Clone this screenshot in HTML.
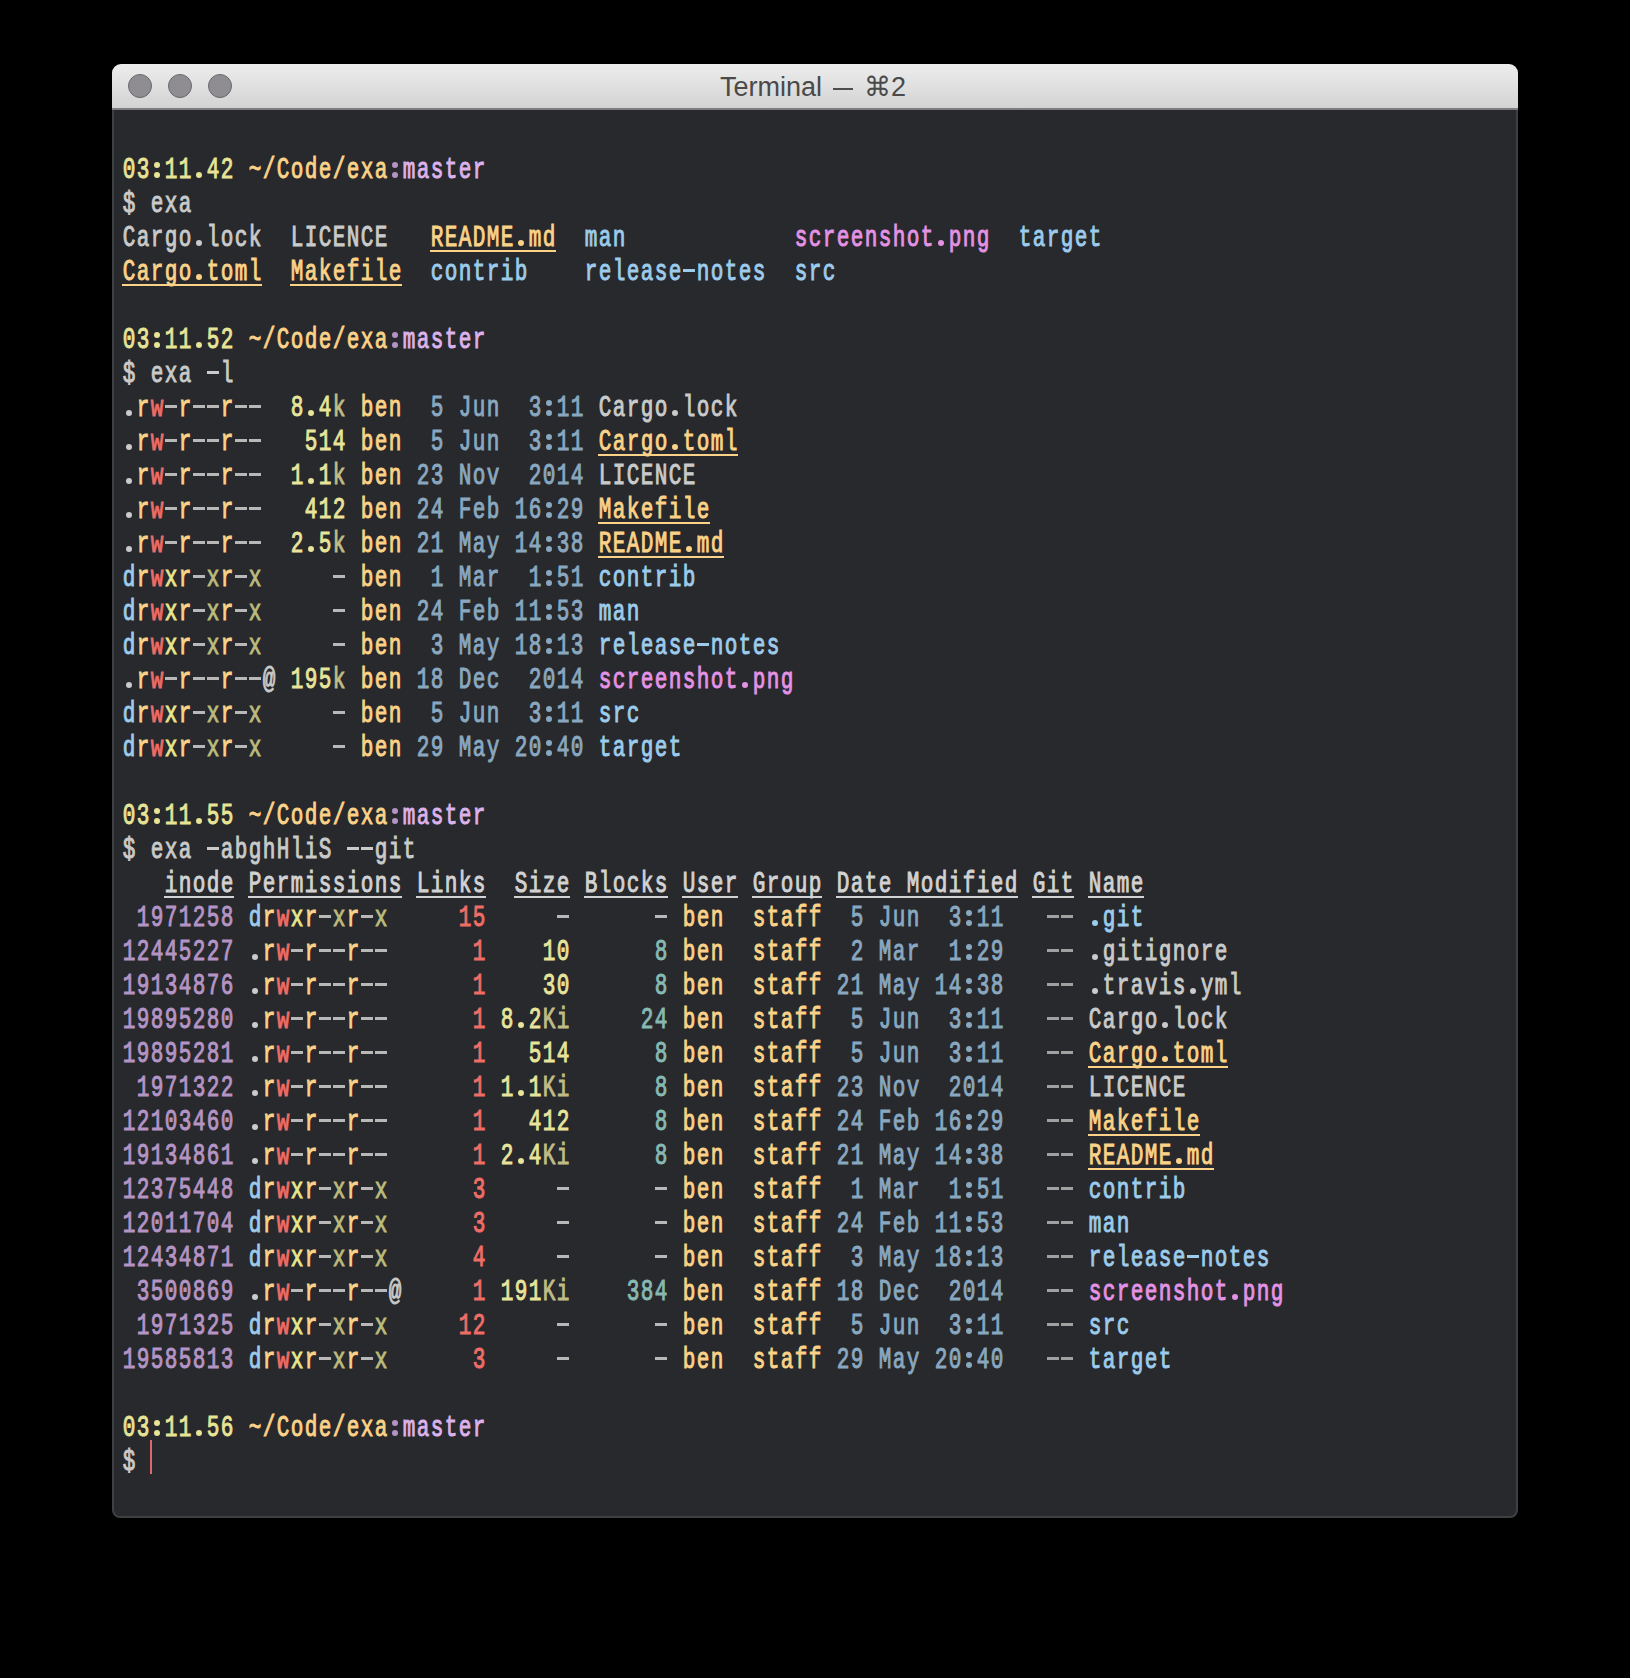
<!DOCTYPE html>
<html><head><meta charset="utf-8"><style>
html,body{margin:0;padding:0;background:#000;width:1630px;height:1678px;overflow:hidden}
#win{position:absolute;left:112px;top:64px;width:1406px;height:1454px;border-radius:9px 9px 8px 8px;overflow:hidden;background:#28292d}
#title{position:absolute;left:0;top:0;width:1406px;height:44px;background:linear-gradient(#ededed,#d3d3d3);}
#tline{position:absolute;left:0;top:44px;width:1406px;height:2px;background:#7d7d7d}
#content{position:absolute;left:0;top:46px;width:1406px;height:1408px;box-sizing:border-box;border:2px solid #3e4144;border-top:none;border-radius:0 0 8px 8px;background:#28292d}
.dot{position:absolute;top:10px;width:22px;height:22px;border-radius:50%;background:#8f8d92;border:1px solid #68676c}
.tt{position:absolute;top:0;white-space:pre;font-family:"Liberation Sans",sans-serif;font-size:27px;line-height:46px;color:#4a4a4a}
.row{position:absolute;left:122px;height:0;width:1300px}
.row span{position:absolute;bottom:-4.95px;white-space:pre;font-family:"Liberation Mono",monospace;font-size:23.333px;line-height:1;-webkit-text-stroke:0.8px currentColor}
.row b{display:inline-block;width:14px;font-weight:normal;text-align:center;transform:scale(0.9,1.25);transform-origin:50% 17.88px}
.u{position:absolute;height:2px;display:block}
.h{position:absolute;height:3px;width:12px;display:block}
.d{position:absolute;height:6.2px;width:6.2px;border-radius:50%;display:block}
#cursor{position:absolute;left:150px;top:1440px;width:2px;height:34px;background:#dc676e}
</style></head><body>
<div id="win">
<div id="title"><div class="dot" style="left:16px"></div><div class="dot" style="left:56px"></div><div class="dot" style="left:96px"></div><span class="tt" style="left:608px">Terminal</span><i style="position:absolute;left:721px;top:24px;width:20px;height:2px;background:#4d4d4d"></i><span class="tt" style="left:752px">⌘2</span></div>
<div id="tline"></div>
<div id="content"></div>
</div>
<i class="d" style="left:153.7px;top:171.8px;background:#e8e496"></i>
<i class="d" style="left:153.7px;top:162.2px;background:#e8e496"></i>
<i class="d" style="left:195.7px;top:171.8px;background:#e8e496"></i>
<i class="d" style="left:391.7px;top:171.8px;background:#b494c4"></i>
<i class="d" style="left:391.7px;top:162.2px;background:#b494c4"></i>
<div class="row" style="top:179px"><span style="left:0px;color:#e8e496"><b>0</b><b>3</b><b> </b><b>1</b><b>1</b><b> </b><b>4</b><b>2</b></span><span style="left:126px;color:#fbd287"><b>~</b><b>/</b><b>C</b><b>o</b><b>d</b><b>e</b><b>/</b><b>e</b><b>x</b><b>a</b></span><span style="left:280px;color:#dcb2ea"><b>m</b><b>a</b><b>s</b><b>t</b><b>e</b><b>r</b></span></div>
<div class="row" style="top:213px"><span style="left:0px;color:#c9cac9"><b>$</b><b> </b><b>e</b><b>x</b><b>a</b></span></div>
<i class="d" style="left:195.7px;top:239.8px;background:#c9cac9"></i>
<i class="d" style="left:517.7px;top:239.8px;background:#fbd287"></i>
<i class="u" style="left:430px;top:250px;width:126px;background:#fbd287"></i>
<i class="d" style="left:937.7px;top:239.8px;background:#e492e4"></i>
<div class="row" style="top:247px"><span style="left:0px;color:#c9cac9"><b>C</b><b>a</b><b>r</b><b>g</b><b>o</b><b> </b><b>l</b><b>o</b><b>c</b><b>k</b></span><span style="left:168px;color:#c9cac9"><b>L</b><b>I</b><b>C</b><b>E</b><b>N</b><b>C</b><b>E</b></span><span style="left:308px;color:#fbd287"><b>R</b><b>E</b><b>A</b><b>D</b><b>M</b><b>E</b><b> </b><b>m</b><b>d</b></span><span style="left:462px;color:#9ccbeb"><b>m</b><b>a</b><b>n</b></span><span style="left:672px;color:#e492e4"><b>s</b><b>c</b><b>r</b><b>e</b><b>e</b><b>n</b><b>s</b><b>h</b><b>o</b><b>t</b><b> </b><b>p</b><b>n</b><b>g</b></span><span style="left:896px;color:#9ccbeb"><b>t</b><b>a</b><b>r</b><b>g</b><b>e</b><b>t</b></span></div>
<i class="d" style="left:195.7px;top:273.8px;background:#fbd287"></i>
<i class="u" style="left:122px;top:284px;width:140px;background:#fbd287"></i>
<i class="u" style="left:290px;top:284px;width:112px;background:#fbd287"></i>
<i class="h" style="left:683px;top:269px;background:#9ccbeb"></i>
<div class="row" style="top:281px"><span style="left:0px;color:#fbd287"><b>C</b><b>a</b><b>r</b><b>g</b><b>o</b><b> </b><b>t</b><b>o</b><b>m</b><b>l</b></span><span style="left:168px;color:#fbd287"><b>M</b><b>a</b><b>k</b><b>e</b><b>f</b><b>i</b><b>l</b><b>e</b></span><span style="left:308px;color:#9ccbeb"><b>c</b><b>o</b><b>n</b><b>t</b><b>r</b><b>i</b><b>b</b></span><span style="left:462px;color:#9ccbeb"><b>r</b><b>e</b><b>l</b><b>e</b><b>a</b><b>s</b><b>e</b><b> </b><b>n</b><b>o</b><b>t</b><b>e</b><b>s</b></span><span style="left:672px;color:#9ccbeb"><b>s</b><b>r</b><b>c</b></span></div>
<i class="d" style="left:153.7px;top:341.8px;background:#e8e496"></i>
<i class="d" style="left:153.7px;top:332.2px;background:#e8e496"></i>
<i class="d" style="left:195.7px;top:341.8px;background:#e8e496"></i>
<i class="d" style="left:391.7px;top:341.8px;background:#b494c4"></i>
<i class="d" style="left:391.7px;top:332.2px;background:#b494c4"></i>
<div class="row" style="top:349px"><span style="left:0px;color:#e8e496"><b>0</b><b>3</b><b> </b><b>1</b><b>1</b><b> </b><b>5</b><b>2</b></span><span style="left:126px;color:#fbd287"><b>~</b><b>/</b><b>C</b><b>o</b><b>d</b><b>e</b><b>/</b><b>e</b><b>x</b><b>a</b></span><span style="left:280px;color:#dcb2ea"><b>m</b><b>a</b><b>s</b><b>t</b><b>e</b><b>r</b></span></div>
<i class="h" style="left:207px;top:371px;background:#c9cac9"></i>
<div class="row" style="top:383px"><span style="left:0px;color:#c9cac9"><b>$</b><b> </b><b>e</b><b>x</b><b>a</b><b> </b><b> </b><b>l</b></span></div>
<i class="d" style="left:125.7px;top:409.8px;background:#c9cac9"></i>
<i class="h" style="left:165px;top:405px;background:#b8b8b8"></i>
<i class="h" style="left:193px;top:405px;background:#b8b8b8"></i>
<i class="h" style="left:207px;top:405px;background:#b8b8b8"></i>
<i class="h" style="left:235px;top:405px;background:#b8b8b8"></i>
<i class="h" style="left:249px;top:405px;background:#b8b8b8"></i>
<i class="d" style="left:307.7px;top:409.8px;background:#e8e49a"></i>
<i class="d" style="left:545.7px;top:409.8px;background:#89a8c0"></i>
<i class="d" style="left:545.7px;top:400.2px;background:#89a8c0"></i>
<i class="d" style="left:671.7px;top:409.8px;background:#c9cac9"></i>
<div class="row" style="top:417px"><span style="left:14px;color:#fbd287"><b>r</b></span><span style="left:28px;color:#ef6d66"><b>w</b></span><span style="left:56px;color:#fbd287"><b>r</b></span><span style="left:98px;color:#fbd287"><b>r</b></span><span style="left:168px;color:#e8e49a"><b>8</b><b> </b><b>4</b></span><span style="left:210px;color:#c0bc86"><b>k</b></span><span style="left:238px;color:#fbd287"><b>b</b><b>e</b><b>n</b></span><span style="left:294px;color:#89a8c0"><b> </b><b>5</b><b> </b><b>J</b><b>u</b><b>n</b><b> </b><b> </b><b>3</b><b> </b><b>1</b><b>1</b></span><span style="left:476px;color:#c9cac9"><b>C</b><b>a</b><b>r</b><b>g</b><b>o</b><b> </b><b>l</b><b>o</b><b>c</b><b>k</b></span></div>
<i class="d" style="left:125.7px;top:443.8px;background:#c9cac9"></i>
<i class="h" style="left:165px;top:439px;background:#b8b8b8"></i>
<i class="h" style="left:193px;top:439px;background:#b8b8b8"></i>
<i class="h" style="left:207px;top:439px;background:#b8b8b8"></i>
<i class="h" style="left:235px;top:439px;background:#b8b8b8"></i>
<i class="h" style="left:249px;top:439px;background:#b8b8b8"></i>
<i class="d" style="left:545.7px;top:443.8px;background:#89a8c0"></i>
<i class="d" style="left:545.7px;top:434.2px;background:#89a8c0"></i>
<i class="d" style="left:671.7px;top:443.8px;background:#fbd287"></i>
<i class="u" style="left:598px;top:454px;width:140px;background:#fbd287"></i>
<div class="row" style="top:451px"><span style="left:14px;color:#fbd287"><b>r</b></span><span style="left:28px;color:#ef6d66"><b>w</b></span><span style="left:56px;color:#fbd287"><b>r</b></span><span style="left:98px;color:#fbd287"><b>r</b></span><span style="left:182px;color:#e8e49a"><b>5</b><b>1</b><b>4</b></span><span style="left:238px;color:#fbd287"><b>b</b><b>e</b><b>n</b></span><span style="left:294px;color:#89a8c0"><b> </b><b>5</b><b> </b><b>J</b><b>u</b><b>n</b><b> </b><b> </b><b>3</b><b> </b><b>1</b><b>1</b></span><span style="left:476px;color:#fbd287"><b>C</b><b>a</b><b>r</b><b>g</b><b>o</b><b> </b><b>t</b><b>o</b><b>m</b><b>l</b></span></div>
<i class="d" style="left:125.7px;top:477.8px;background:#c9cac9"></i>
<i class="h" style="left:165px;top:473px;background:#b8b8b8"></i>
<i class="h" style="left:193px;top:473px;background:#b8b8b8"></i>
<i class="h" style="left:207px;top:473px;background:#b8b8b8"></i>
<i class="h" style="left:235px;top:473px;background:#b8b8b8"></i>
<i class="h" style="left:249px;top:473px;background:#b8b8b8"></i>
<i class="d" style="left:307.7px;top:477.8px;background:#e8e49a"></i>
<div class="row" style="top:485px"><span style="left:14px;color:#fbd287"><b>r</b></span><span style="left:28px;color:#ef6d66"><b>w</b></span><span style="left:56px;color:#fbd287"><b>r</b></span><span style="left:98px;color:#fbd287"><b>r</b></span><span style="left:168px;color:#e8e49a"><b>1</b><b> </b><b>1</b></span><span style="left:210px;color:#c0bc86"><b>k</b></span><span style="left:238px;color:#fbd287"><b>b</b><b>e</b><b>n</b></span><span style="left:294px;color:#89a8c0"><b>2</b><b>3</b><b> </b><b>N</b><b>o</b><b>v</b><b> </b><b> </b><b>2</b><b>0</b><b>1</b><b>4</b></span><span style="left:476px;color:#c9cac9"><b>L</b><b>I</b><b>C</b><b>E</b><b>N</b><b>C</b><b>E</b></span></div>
<i class="d" style="left:125.7px;top:511.8px;background:#c9cac9"></i>
<i class="h" style="left:165px;top:507px;background:#b8b8b8"></i>
<i class="h" style="left:193px;top:507px;background:#b8b8b8"></i>
<i class="h" style="left:207px;top:507px;background:#b8b8b8"></i>
<i class="h" style="left:235px;top:507px;background:#b8b8b8"></i>
<i class="h" style="left:249px;top:507px;background:#b8b8b8"></i>
<i class="d" style="left:545.7px;top:511.8px;background:#89a8c0"></i>
<i class="d" style="left:545.7px;top:502.2px;background:#89a8c0"></i>
<i class="u" style="left:598px;top:522px;width:112px;background:#fbd287"></i>
<div class="row" style="top:519px"><span style="left:14px;color:#fbd287"><b>r</b></span><span style="left:28px;color:#ef6d66"><b>w</b></span><span style="left:56px;color:#fbd287"><b>r</b></span><span style="left:98px;color:#fbd287"><b>r</b></span><span style="left:182px;color:#e8e49a"><b>4</b><b>1</b><b>2</b></span><span style="left:238px;color:#fbd287"><b>b</b><b>e</b><b>n</b></span><span style="left:294px;color:#89a8c0"><b>2</b><b>4</b><b> </b><b>F</b><b>e</b><b>b</b><b> </b><b>1</b><b>6</b><b> </b><b>2</b><b>9</b></span><span style="left:476px;color:#fbd287"><b>M</b><b>a</b><b>k</b><b>e</b><b>f</b><b>i</b><b>l</b><b>e</b></span></div>
<i class="d" style="left:125.7px;top:545.8px;background:#c9cac9"></i>
<i class="h" style="left:165px;top:541px;background:#b8b8b8"></i>
<i class="h" style="left:193px;top:541px;background:#b8b8b8"></i>
<i class="h" style="left:207px;top:541px;background:#b8b8b8"></i>
<i class="h" style="left:235px;top:541px;background:#b8b8b8"></i>
<i class="h" style="left:249px;top:541px;background:#b8b8b8"></i>
<i class="d" style="left:307.7px;top:545.8px;background:#e8e49a"></i>
<i class="d" style="left:545.7px;top:545.8px;background:#89a8c0"></i>
<i class="d" style="left:545.7px;top:536.2px;background:#89a8c0"></i>
<i class="d" style="left:685.7px;top:545.8px;background:#fbd287"></i>
<i class="u" style="left:598px;top:556px;width:126px;background:#fbd287"></i>
<div class="row" style="top:553px"><span style="left:14px;color:#fbd287"><b>r</b></span><span style="left:28px;color:#ef6d66"><b>w</b></span><span style="left:56px;color:#fbd287"><b>r</b></span><span style="left:98px;color:#fbd287"><b>r</b></span><span style="left:168px;color:#e8e49a"><b>2</b><b> </b><b>5</b></span><span style="left:210px;color:#c0bc86"><b>k</b></span><span style="left:238px;color:#fbd287"><b>b</b><b>e</b><b>n</b></span><span style="left:294px;color:#89a8c0"><b>2</b><b>1</b><b> </b><b>M</b><b>a</b><b>y</b><b> </b><b>1</b><b>4</b><b> </b><b>3</b><b>8</b></span><span style="left:476px;color:#fbd287"><b>R</b><b>E</b><b>A</b><b>D</b><b>M</b><b>E</b><b> </b><b>m</b><b>d</b></span></div>
<i class="h" style="left:193px;top:575px;background:#b8b8b8"></i>
<i class="h" style="left:235px;top:575px;background:#b8b8b8"></i>
<i class="h" style="left:333px;top:575px;background:#b8b8b8"></i>
<i class="d" style="left:545.7px;top:579.8px;background:#89a8c0"></i>
<i class="d" style="left:545.7px;top:570.2px;background:#89a8c0"></i>
<div class="row" style="top:587px"><span style="left:0px;color:#9ccbeb"><b>d</b></span><span style="left:14px;color:#fbd287"><b>r</b></span><span style="left:28px;color:#ef6d66"><b>w</b></span><span style="left:42px;color:#e8e68e"><b>x</b></span><span style="left:56px;color:#fbd287"><b>r</b></span><span style="left:84px;color:#bcbb7c"><b>x</b></span><span style="left:98px;color:#fbd287"><b>r</b></span><span style="left:126px;color:#bcbb7c"><b>x</b></span><span style="left:238px;color:#fbd287"><b>b</b><b>e</b><b>n</b></span><span style="left:294px;color:#89a8c0"><b> </b><b>1</b><b> </b><b>M</b><b>a</b><b>r</b><b> </b><b> </b><b>1</b><b> </b><b>5</b><b>1</b></span><span style="left:476px;color:#9ccbeb"><b>c</b><b>o</b><b>n</b><b>t</b><b>r</b><b>i</b><b>b</b></span></div>
<i class="h" style="left:193px;top:609px;background:#b8b8b8"></i>
<i class="h" style="left:235px;top:609px;background:#b8b8b8"></i>
<i class="h" style="left:333px;top:609px;background:#b8b8b8"></i>
<i class="d" style="left:545.7px;top:613.8px;background:#89a8c0"></i>
<i class="d" style="left:545.7px;top:604.2px;background:#89a8c0"></i>
<div class="row" style="top:621px"><span style="left:0px;color:#9ccbeb"><b>d</b></span><span style="left:14px;color:#fbd287"><b>r</b></span><span style="left:28px;color:#ef6d66"><b>w</b></span><span style="left:42px;color:#e8e68e"><b>x</b></span><span style="left:56px;color:#fbd287"><b>r</b></span><span style="left:84px;color:#bcbb7c"><b>x</b></span><span style="left:98px;color:#fbd287"><b>r</b></span><span style="left:126px;color:#bcbb7c"><b>x</b></span><span style="left:238px;color:#fbd287"><b>b</b><b>e</b><b>n</b></span><span style="left:294px;color:#89a8c0"><b>2</b><b>4</b><b> </b><b>F</b><b>e</b><b>b</b><b> </b><b>1</b><b>1</b><b> </b><b>5</b><b>3</b></span><span style="left:476px;color:#9ccbeb"><b>m</b><b>a</b><b>n</b></span></div>
<i class="h" style="left:193px;top:643px;background:#b8b8b8"></i>
<i class="h" style="left:235px;top:643px;background:#b8b8b8"></i>
<i class="h" style="left:333px;top:643px;background:#b8b8b8"></i>
<i class="d" style="left:545.7px;top:647.8px;background:#89a8c0"></i>
<i class="d" style="left:545.7px;top:638.2px;background:#89a8c0"></i>
<i class="h" style="left:697px;top:643px;background:#9ccbeb"></i>
<div class="row" style="top:655px"><span style="left:0px;color:#9ccbeb"><b>d</b></span><span style="left:14px;color:#fbd287"><b>r</b></span><span style="left:28px;color:#ef6d66"><b>w</b></span><span style="left:42px;color:#e8e68e"><b>x</b></span><span style="left:56px;color:#fbd287"><b>r</b></span><span style="left:84px;color:#bcbb7c"><b>x</b></span><span style="left:98px;color:#fbd287"><b>r</b></span><span style="left:126px;color:#bcbb7c"><b>x</b></span><span style="left:238px;color:#fbd287"><b>b</b><b>e</b><b>n</b></span><span style="left:294px;color:#89a8c0"><b> </b><b>3</b><b> </b><b>M</b><b>a</b><b>y</b><b> </b><b>1</b><b>8</b><b> </b><b>1</b><b>3</b></span><span style="left:476px;color:#9ccbeb"><b>r</b><b>e</b><b>l</b><b>e</b><b>a</b><b>s</b><b>e</b><b> </b><b>n</b><b>o</b><b>t</b><b>e</b><b>s</b></span></div>
<i class="d" style="left:125.7px;top:681.8px;background:#c9cac9"></i>
<i class="h" style="left:165px;top:677px;background:#b8b8b8"></i>
<i class="h" style="left:193px;top:677px;background:#b8b8b8"></i>
<i class="h" style="left:207px;top:677px;background:#b8b8b8"></i>
<i class="h" style="left:235px;top:677px;background:#b8b8b8"></i>
<i class="h" style="left:249px;top:677px;background:#b8b8b8"></i>
<i class="d" style="left:741.7px;top:681.8px;background:#e492e4"></i>
<div class="row" style="top:689px"><span style="left:14px;color:#fbd287"><b>r</b></span><span style="left:28px;color:#ef6d66"><b>w</b></span><span style="left:56px;color:#fbd287"><b>r</b></span><span style="left:98px;color:#fbd287"><b>r</b></span><span style="left:140px;color:#c9cac9"><b>@</b></span><span style="left:168px;color:#e8e49a"><b>1</b><b>9</b><b>5</b></span><span style="left:210px;color:#c0bc86"><b>k</b></span><span style="left:238px;color:#fbd287"><b>b</b><b>e</b><b>n</b></span><span style="left:294px;color:#89a8c0"><b>1</b><b>8</b><b> </b><b>D</b><b>e</b><b>c</b><b> </b><b> </b><b>2</b><b>0</b><b>1</b><b>4</b></span><span style="left:476px;color:#e492e4"><b>s</b><b>c</b><b>r</b><b>e</b><b>e</b><b>n</b><b>s</b><b>h</b><b>o</b><b>t</b><b> </b><b>p</b><b>n</b><b>g</b></span></div>
<i class="h" style="left:193px;top:711px;background:#b8b8b8"></i>
<i class="h" style="left:235px;top:711px;background:#b8b8b8"></i>
<i class="h" style="left:333px;top:711px;background:#b8b8b8"></i>
<i class="d" style="left:545.7px;top:715.8px;background:#89a8c0"></i>
<i class="d" style="left:545.7px;top:706.2px;background:#89a8c0"></i>
<div class="row" style="top:723px"><span style="left:0px;color:#9ccbeb"><b>d</b></span><span style="left:14px;color:#fbd287"><b>r</b></span><span style="left:28px;color:#ef6d66"><b>w</b></span><span style="left:42px;color:#e8e68e"><b>x</b></span><span style="left:56px;color:#fbd287"><b>r</b></span><span style="left:84px;color:#bcbb7c"><b>x</b></span><span style="left:98px;color:#fbd287"><b>r</b></span><span style="left:126px;color:#bcbb7c"><b>x</b></span><span style="left:238px;color:#fbd287"><b>b</b><b>e</b><b>n</b></span><span style="left:294px;color:#89a8c0"><b> </b><b>5</b><b> </b><b>J</b><b>u</b><b>n</b><b> </b><b> </b><b>3</b><b> </b><b>1</b><b>1</b></span><span style="left:476px;color:#9ccbeb"><b>s</b><b>r</b><b>c</b></span></div>
<i class="h" style="left:193px;top:745px;background:#b8b8b8"></i>
<i class="h" style="left:235px;top:745px;background:#b8b8b8"></i>
<i class="h" style="left:333px;top:745px;background:#b8b8b8"></i>
<i class="d" style="left:545.7px;top:749.8px;background:#89a8c0"></i>
<i class="d" style="left:545.7px;top:740.2px;background:#89a8c0"></i>
<div class="row" style="top:757px"><span style="left:0px;color:#9ccbeb"><b>d</b></span><span style="left:14px;color:#fbd287"><b>r</b></span><span style="left:28px;color:#ef6d66"><b>w</b></span><span style="left:42px;color:#e8e68e"><b>x</b></span><span style="left:56px;color:#fbd287"><b>r</b></span><span style="left:84px;color:#bcbb7c"><b>x</b></span><span style="left:98px;color:#fbd287"><b>r</b></span><span style="left:126px;color:#bcbb7c"><b>x</b></span><span style="left:238px;color:#fbd287"><b>b</b><b>e</b><b>n</b></span><span style="left:294px;color:#89a8c0"><b>2</b><b>9</b><b> </b><b>M</b><b>a</b><b>y</b><b> </b><b>2</b><b>0</b><b> </b><b>4</b><b>0</b></span><span style="left:476px;color:#9ccbeb"><b>t</b><b>a</b><b>r</b><b>g</b><b>e</b><b>t</b></span></div>
<i class="d" style="left:153.7px;top:817.8px;background:#e8e496"></i>
<i class="d" style="left:153.7px;top:808.2px;background:#e8e496"></i>
<i class="d" style="left:195.7px;top:817.8px;background:#e8e496"></i>
<i class="d" style="left:391.7px;top:817.8px;background:#b494c4"></i>
<i class="d" style="left:391.7px;top:808.2px;background:#b494c4"></i>
<div class="row" style="top:825px"><span style="left:0px;color:#e8e496"><b>0</b><b>3</b><b> </b><b>1</b><b>1</b><b> </b><b>5</b><b>5</b></span><span style="left:126px;color:#fbd287"><b>~</b><b>/</b><b>C</b><b>o</b><b>d</b><b>e</b><b>/</b><b>e</b><b>x</b><b>a</b></span><span style="left:280px;color:#dcb2ea"><b>m</b><b>a</b><b>s</b><b>t</b><b>e</b><b>r</b></span></div>
<i class="h" style="left:207px;top:847px;background:#c9cac9"></i>
<i class="h" style="left:347px;top:847px;background:#c9cac9"></i>
<i class="h" style="left:361px;top:847px;background:#c9cac9"></i>
<div class="row" style="top:859px"><span style="left:0px;color:#c9cac9"><b>$</b><b> </b><b>e</b><b>x</b><b>a</b><b> </b><b> </b><b>a</b><b>b</b><b>g</b><b>h</b><b>H</b><b>l</b><b>i</b><b>S</b><b> </b><b> </b><b> </b><b>g</b><b>i</b><b>t</b></span></div>
<i class="u" style="left:164px;top:896px;width:70px;background:#d2d2d2"></i>
<i class="u" style="left:248px;top:896px;width:154px;background:#d2d2d2"></i>
<i class="u" style="left:416px;top:896px;width:70px;background:#d2d2d2"></i>
<i class="u" style="left:514px;top:896px;width:56px;background:#d2d2d2"></i>
<i class="u" style="left:584px;top:896px;width:84px;background:#d2d2d2"></i>
<i class="u" style="left:682px;top:896px;width:56px;background:#d2d2d2"></i>
<i class="u" style="left:752px;top:896px;width:70px;background:#d2d2d2"></i>
<i class="u" style="left:836px;top:896px;width:182px;background:#d2d2d2"></i>
<i class="u" style="left:1032px;top:896px;width:42px;background:#d2d2d2"></i>
<i class="u" style="left:1088px;top:896px;width:56px;background:#d2d2d2"></i>
<div class="row" style="top:893px"><span style="left:42px;color:#d2d2d2"><b>i</b><b>n</b><b>o</b><b>d</b><b>e</b></span><span style="left:126px;color:#d2d2d2"><b>P</b><b>e</b><b>r</b><b>m</b><b>i</b><b>s</b><b>s</b><b>i</b><b>o</b><b>n</b><b>s</b></span><span style="left:294px;color:#d2d2d2"><b>L</b><b>i</b><b>n</b><b>k</b><b>s</b></span><span style="left:392px;color:#d2d2d2"><b>S</b><b>i</b><b>z</b><b>e</b></span><span style="left:462px;color:#d2d2d2"><b>B</b><b>l</b><b>o</b><b>c</b><b>k</b><b>s</b></span><span style="left:560px;color:#d2d2d2"><b>U</b><b>s</b><b>e</b><b>r</b></span><span style="left:630px;color:#d2d2d2"><b>G</b><b>r</b><b>o</b><b>u</b><b>p</b></span><span style="left:714px;color:#d2d2d2"><b>D</b><b>a</b><b>t</b><b>e</b><b> </b><b>M</b><b>o</b><b>d</b><b>i</b><b>f</b><b>i</b><b>e</b><b>d</b></span><span style="left:910px;color:#d2d2d2"><b>G</b><b>i</b><b>t</b></span><span style="left:966px;color:#d2d2d2"><b>N</b><b>a</b><b>m</b><b>e</b></span></div>
<i class="h" style="left:319px;top:915px;background:#b8b8b8"></i>
<i class="h" style="left:361px;top:915px;background:#b8b8b8"></i>
<i class="h" style="left:557px;top:915px;background:#b8b8b8"></i>
<i class="h" style="left:655px;top:915px;background:#b8b8b8"></i>
<i class="d" style="left:965.7px;top:919.8px;background:#89a8c0"></i>
<i class="d" style="left:965.7px;top:910.2px;background:#89a8c0"></i>
<i class="h" style="left:1047px;top:915px;background:#a0a0a0"></i>
<i class="h" style="left:1061px;top:915px;background:#a0a0a0"></i>
<i class="d" style="left:1091.7px;top:919.8px;background:#9ccbeb"></i>
<div class="row" style="top:927px"><span style="left:14px;color:#b494c4"><b>1</b><b>9</b><b>7</b><b>1</b><b>2</b><b>5</b><b>8</b></span><span style="left:126px;color:#9ccbeb"><b>d</b></span><span style="left:140px;color:#fbd287"><b>r</b></span><span style="left:154px;color:#ef6d66"><b>w</b></span><span style="left:168px;color:#e8e68e"><b>x</b></span><span style="left:182px;color:#fbd287"><b>r</b></span><span style="left:210px;color:#bcbb7c"><b>x</b></span><span style="left:224px;color:#fbd287"><b>r</b></span><span style="left:252px;color:#bcbb7c"><b>x</b></span><span style="left:336px;color:#ef6d66"><b>1</b><b>5</b></span><span style="left:560px;color:#fbd287"><b>b</b><b>e</b><b>n</b></span><span style="left:630px;color:#fbd287"><b>s</b><b>t</b><b>a</b><b>f</b><b>f</b></span><span style="left:714px;color:#89a8c0"><b> </b><b>5</b><b> </b><b>J</b><b>u</b><b>n</b><b> </b><b> </b><b>3</b><b> </b><b>1</b><b>1</b></span><span style="left:966px;color:#9ccbeb"><b> </b><b>g</b><b>i</b><b>t</b></span></div>
<i class="d" style="left:251.7px;top:953.8px;background:#c9cac9"></i>
<i class="h" style="left:291px;top:949px;background:#b8b8b8"></i>
<i class="h" style="left:319px;top:949px;background:#b8b8b8"></i>
<i class="h" style="left:333px;top:949px;background:#b8b8b8"></i>
<i class="h" style="left:361px;top:949px;background:#b8b8b8"></i>
<i class="h" style="left:375px;top:949px;background:#b8b8b8"></i>
<i class="d" style="left:965.7px;top:953.8px;background:#89a8c0"></i>
<i class="d" style="left:965.7px;top:944.2px;background:#89a8c0"></i>
<i class="h" style="left:1047px;top:949px;background:#a0a0a0"></i>
<i class="h" style="left:1061px;top:949px;background:#a0a0a0"></i>
<i class="d" style="left:1091.7px;top:953.8px;background:#c9cac9"></i>
<div class="row" style="top:961px"><span style="left:0px;color:#b494c4"><b>1</b><b>2</b><b>4</b><b>4</b><b>5</b><b>2</b><b>2</b><b>7</b></span><span style="left:140px;color:#fbd287"><b>r</b></span><span style="left:154px;color:#ef6d66"><b>w</b></span><span style="left:182px;color:#fbd287"><b>r</b></span><span style="left:224px;color:#fbd287"><b>r</b></span><span style="left:350px;color:#ef6d66"><b>1</b></span><span style="left:420px;color:#e8e49a"><b>1</b><b>0</b></span><span style="left:532px;color:#86b9b2"><b>8</b></span><span style="left:560px;color:#fbd287"><b>b</b><b>e</b><b>n</b></span><span style="left:630px;color:#fbd287"><b>s</b><b>t</b><b>a</b><b>f</b><b>f</b></span><span style="left:714px;color:#89a8c0"><b> </b><b>2</b><b> </b><b>M</b><b>a</b><b>r</b><b> </b><b> </b><b>1</b><b> </b><b>2</b><b>9</b></span><span style="left:966px;color:#c9cac9"><b> </b><b>g</b><b>i</b><b>t</b><b>i</b><b>g</b><b>n</b><b>o</b><b>r</b><b>e</b></span></div>
<i class="d" style="left:251.7px;top:987.8px;background:#c9cac9"></i>
<i class="h" style="left:291px;top:983px;background:#b8b8b8"></i>
<i class="h" style="left:319px;top:983px;background:#b8b8b8"></i>
<i class="h" style="left:333px;top:983px;background:#b8b8b8"></i>
<i class="h" style="left:361px;top:983px;background:#b8b8b8"></i>
<i class="h" style="left:375px;top:983px;background:#b8b8b8"></i>
<i class="d" style="left:965.7px;top:987.8px;background:#89a8c0"></i>
<i class="d" style="left:965.7px;top:978.2px;background:#89a8c0"></i>
<i class="h" style="left:1047px;top:983px;background:#a0a0a0"></i>
<i class="h" style="left:1061px;top:983px;background:#a0a0a0"></i>
<i class="d" style="left:1091.7px;top:987.8px;background:#c9cac9"></i>
<i class="d" style="left:1189.7px;top:987.8px;background:#c9cac9"></i>
<div class="row" style="top:995px"><span style="left:0px;color:#b494c4"><b>1</b><b>9</b><b>1</b><b>3</b><b>4</b><b>8</b><b>7</b><b>6</b></span><span style="left:140px;color:#fbd287"><b>r</b></span><span style="left:154px;color:#ef6d66"><b>w</b></span><span style="left:182px;color:#fbd287"><b>r</b></span><span style="left:224px;color:#fbd287"><b>r</b></span><span style="left:350px;color:#ef6d66"><b>1</b></span><span style="left:420px;color:#e8e49a"><b>3</b><b>0</b></span><span style="left:532px;color:#86b9b2"><b>8</b></span><span style="left:560px;color:#fbd287"><b>b</b><b>e</b><b>n</b></span><span style="left:630px;color:#fbd287"><b>s</b><b>t</b><b>a</b><b>f</b><b>f</b></span><span style="left:714px;color:#89a8c0"><b>2</b><b>1</b><b> </b><b>M</b><b>a</b><b>y</b><b> </b><b>1</b><b>4</b><b> </b><b>3</b><b>8</b></span><span style="left:966px;color:#c9cac9"><b> </b><b>t</b><b>r</b><b>a</b><b>v</b><b>i</b><b>s</b><b> </b><b>y</b><b>m</b><b>l</b></span></div>
<i class="d" style="left:251.7px;top:1021.8px;background:#c9cac9"></i>
<i class="h" style="left:291px;top:1017px;background:#b8b8b8"></i>
<i class="h" style="left:319px;top:1017px;background:#b8b8b8"></i>
<i class="h" style="left:333px;top:1017px;background:#b8b8b8"></i>
<i class="h" style="left:361px;top:1017px;background:#b8b8b8"></i>
<i class="h" style="left:375px;top:1017px;background:#b8b8b8"></i>
<i class="d" style="left:517.7px;top:1021.8px;background:#e8e49a"></i>
<i class="d" style="left:965.7px;top:1021.8px;background:#89a8c0"></i>
<i class="d" style="left:965.7px;top:1012.2px;background:#89a8c0"></i>
<i class="h" style="left:1047px;top:1017px;background:#a0a0a0"></i>
<i class="h" style="left:1061px;top:1017px;background:#a0a0a0"></i>
<i class="d" style="left:1161.7px;top:1021.8px;background:#c9cac9"></i>
<div class="row" style="top:1029px"><span style="left:0px;color:#b494c4"><b>1</b><b>9</b><b>8</b><b>9</b><b>5</b><b>2</b><b>8</b><b>0</b></span><span style="left:140px;color:#fbd287"><b>r</b></span><span style="left:154px;color:#ef6d66"><b>w</b></span><span style="left:182px;color:#fbd287"><b>r</b></span><span style="left:224px;color:#fbd287"><b>r</b></span><span style="left:350px;color:#ef6d66"><b>1</b></span><span style="left:378px;color:#e8e49a"><b>8</b><b> </b><b>2</b></span><span style="left:420px;color:#c0bc86"><b>K</b><b>i</b></span><span style="left:518px;color:#86b9b2"><b>2</b><b>4</b></span><span style="left:560px;color:#fbd287"><b>b</b><b>e</b><b>n</b></span><span style="left:630px;color:#fbd287"><b>s</b><b>t</b><b>a</b><b>f</b><b>f</b></span><span style="left:714px;color:#89a8c0"><b> </b><b>5</b><b> </b><b>J</b><b>u</b><b>n</b><b> </b><b> </b><b>3</b><b> </b><b>1</b><b>1</b></span><span style="left:966px;color:#c9cac9"><b>C</b><b>a</b><b>r</b><b>g</b><b>o</b><b> </b><b>l</b><b>o</b><b>c</b><b>k</b></span></div>
<i class="d" style="left:251.7px;top:1055.8px;background:#c9cac9"></i>
<i class="h" style="left:291px;top:1051px;background:#b8b8b8"></i>
<i class="h" style="left:319px;top:1051px;background:#b8b8b8"></i>
<i class="h" style="left:333px;top:1051px;background:#b8b8b8"></i>
<i class="h" style="left:361px;top:1051px;background:#b8b8b8"></i>
<i class="h" style="left:375px;top:1051px;background:#b8b8b8"></i>
<i class="d" style="left:965.7px;top:1055.8px;background:#89a8c0"></i>
<i class="d" style="left:965.7px;top:1046.2px;background:#89a8c0"></i>
<i class="h" style="left:1047px;top:1051px;background:#a0a0a0"></i>
<i class="h" style="left:1061px;top:1051px;background:#a0a0a0"></i>
<i class="d" style="left:1161.7px;top:1055.8px;background:#fbd287"></i>
<i class="u" style="left:1088px;top:1066px;width:140px;background:#fbd287"></i>
<div class="row" style="top:1063px"><span style="left:0px;color:#b494c4"><b>1</b><b>9</b><b>8</b><b>9</b><b>5</b><b>2</b><b>8</b><b>1</b></span><span style="left:140px;color:#fbd287"><b>r</b></span><span style="left:154px;color:#ef6d66"><b>w</b></span><span style="left:182px;color:#fbd287"><b>r</b></span><span style="left:224px;color:#fbd287"><b>r</b></span><span style="left:350px;color:#ef6d66"><b>1</b></span><span style="left:406px;color:#e8e49a"><b>5</b><b>1</b><b>4</b></span><span style="left:532px;color:#86b9b2"><b>8</b></span><span style="left:560px;color:#fbd287"><b>b</b><b>e</b><b>n</b></span><span style="left:630px;color:#fbd287"><b>s</b><b>t</b><b>a</b><b>f</b><b>f</b></span><span style="left:714px;color:#89a8c0"><b> </b><b>5</b><b> </b><b>J</b><b>u</b><b>n</b><b> </b><b> </b><b>3</b><b> </b><b>1</b><b>1</b></span><span style="left:966px;color:#fbd287"><b>C</b><b>a</b><b>r</b><b>g</b><b>o</b><b> </b><b>t</b><b>o</b><b>m</b><b>l</b></span></div>
<i class="d" style="left:251.7px;top:1089.8px;background:#c9cac9"></i>
<i class="h" style="left:291px;top:1085px;background:#b8b8b8"></i>
<i class="h" style="left:319px;top:1085px;background:#b8b8b8"></i>
<i class="h" style="left:333px;top:1085px;background:#b8b8b8"></i>
<i class="h" style="left:361px;top:1085px;background:#b8b8b8"></i>
<i class="h" style="left:375px;top:1085px;background:#b8b8b8"></i>
<i class="d" style="left:517.7px;top:1089.8px;background:#e8e49a"></i>
<i class="h" style="left:1047px;top:1085px;background:#a0a0a0"></i>
<i class="h" style="left:1061px;top:1085px;background:#a0a0a0"></i>
<div class="row" style="top:1097px"><span style="left:14px;color:#b494c4"><b>1</b><b>9</b><b>7</b><b>1</b><b>3</b><b>2</b><b>2</b></span><span style="left:140px;color:#fbd287"><b>r</b></span><span style="left:154px;color:#ef6d66"><b>w</b></span><span style="left:182px;color:#fbd287"><b>r</b></span><span style="left:224px;color:#fbd287"><b>r</b></span><span style="left:350px;color:#ef6d66"><b>1</b></span><span style="left:378px;color:#e8e49a"><b>1</b><b> </b><b>1</b></span><span style="left:420px;color:#c0bc86"><b>K</b><b>i</b></span><span style="left:532px;color:#86b9b2"><b>8</b></span><span style="left:560px;color:#fbd287"><b>b</b><b>e</b><b>n</b></span><span style="left:630px;color:#fbd287"><b>s</b><b>t</b><b>a</b><b>f</b><b>f</b></span><span style="left:714px;color:#89a8c0"><b>2</b><b>3</b><b> </b><b>N</b><b>o</b><b>v</b><b> </b><b> </b><b>2</b><b>0</b><b>1</b><b>4</b></span><span style="left:966px;color:#c9cac9"><b>L</b><b>I</b><b>C</b><b>E</b><b>N</b><b>C</b><b>E</b></span></div>
<i class="d" style="left:251.7px;top:1123.8px;background:#c9cac9"></i>
<i class="h" style="left:291px;top:1119px;background:#b8b8b8"></i>
<i class="h" style="left:319px;top:1119px;background:#b8b8b8"></i>
<i class="h" style="left:333px;top:1119px;background:#b8b8b8"></i>
<i class="h" style="left:361px;top:1119px;background:#b8b8b8"></i>
<i class="h" style="left:375px;top:1119px;background:#b8b8b8"></i>
<i class="d" style="left:965.7px;top:1123.8px;background:#89a8c0"></i>
<i class="d" style="left:965.7px;top:1114.2px;background:#89a8c0"></i>
<i class="h" style="left:1047px;top:1119px;background:#a0a0a0"></i>
<i class="h" style="left:1061px;top:1119px;background:#a0a0a0"></i>
<i class="u" style="left:1088px;top:1134px;width:112px;background:#fbd287"></i>
<div class="row" style="top:1131px"><span style="left:0px;color:#b494c4"><b>1</b><b>2</b><b>1</b><b>0</b><b>3</b><b>4</b><b>6</b><b>0</b></span><span style="left:140px;color:#fbd287"><b>r</b></span><span style="left:154px;color:#ef6d66"><b>w</b></span><span style="left:182px;color:#fbd287"><b>r</b></span><span style="left:224px;color:#fbd287"><b>r</b></span><span style="left:350px;color:#ef6d66"><b>1</b></span><span style="left:406px;color:#e8e49a"><b>4</b><b>1</b><b>2</b></span><span style="left:532px;color:#86b9b2"><b>8</b></span><span style="left:560px;color:#fbd287"><b>b</b><b>e</b><b>n</b></span><span style="left:630px;color:#fbd287"><b>s</b><b>t</b><b>a</b><b>f</b><b>f</b></span><span style="left:714px;color:#89a8c0"><b>2</b><b>4</b><b> </b><b>F</b><b>e</b><b>b</b><b> </b><b>1</b><b>6</b><b> </b><b>2</b><b>9</b></span><span style="left:966px;color:#fbd287"><b>M</b><b>a</b><b>k</b><b>e</b><b>f</b><b>i</b><b>l</b><b>e</b></span></div>
<i class="d" style="left:251.7px;top:1157.8px;background:#c9cac9"></i>
<i class="h" style="left:291px;top:1153px;background:#b8b8b8"></i>
<i class="h" style="left:319px;top:1153px;background:#b8b8b8"></i>
<i class="h" style="left:333px;top:1153px;background:#b8b8b8"></i>
<i class="h" style="left:361px;top:1153px;background:#b8b8b8"></i>
<i class="h" style="left:375px;top:1153px;background:#b8b8b8"></i>
<i class="d" style="left:517.7px;top:1157.8px;background:#e8e49a"></i>
<i class="d" style="left:965.7px;top:1157.8px;background:#89a8c0"></i>
<i class="d" style="left:965.7px;top:1148.2px;background:#89a8c0"></i>
<i class="h" style="left:1047px;top:1153px;background:#a0a0a0"></i>
<i class="h" style="left:1061px;top:1153px;background:#a0a0a0"></i>
<i class="d" style="left:1175.7px;top:1157.8px;background:#fbd287"></i>
<i class="u" style="left:1088px;top:1168px;width:126px;background:#fbd287"></i>
<div class="row" style="top:1165px"><span style="left:0px;color:#b494c4"><b>1</b><b>9</b><b>1</b><b>3</b><b>4</b><b>8</b><b>6</b><b>1</b></span><span style="left:140px;color:#fbd287"><b>r</b></span><span style="left:154px;color:#ef6d66"><b>w</b></span><span style="left:182px;color:#fbd287"><b>r</b></span><span style="left:224px;color:#fbd287"><b>r</b></span><span style="left:350px;color:#ef6d66"><b>1</b></span><span style="left:378px;color:#e8e49a"><b>2</b><b> </b><b>4</b></span><span style="left:420px;color:#c0bc86"><b>K</b><b>i</b></span><span style="left:532px;color:#86b9b2"><b>8</b></span><span style="left:560px;color:#fbd287"><b>b</b><b>e</b><b>n</b></span><span style="left:630px;color:#fbd287"><b>s</b><b>t</b><b>a</b><b>f</b><b>f</b></span><span style="left:714px;color:#89a8c0"><b>2</b><b>1</b><b> </b><b>M</b><b>a</b><b>y</b><b> </b><b>1</b><b>4</b><b> </b><b>3</b><b>8</b></span><span style="left:966px;color:#fbd287"><b>R</b><b>E</b><b>A</b><b>D</b><b>M</b><b>E</b><b> </b><b>m</b><b>d</b></span></div>
<i class="h" style="left:319px;top:1187px;background:#b8b8b8"></i>
<i class="h" style="left:361px;top:1187px;background:#b8b8b8"></i>
<i class="h" style="left:557px;top:1187px;background:#b8b8b8"></i>
<i class="h" style="left:655px;top:1187px;background:#b8b8b8"></i>
<i class="d" style="left:965.7px;top:1191.8px;background:#89a8c0"></i>
<i class="d" style="left:965.7px;top:1182.2px;background:#89a8c0"></i>
<i class="h" style="left:1047px;top:1187px;background:#a0a0a0"></i>
<i class="h" style="left:1061px;top:1187px;background:#a0a0a0"></i>
<div class="row" style="top:1199px"><span style="left:0px;color:#b494c4"><b>1</b><b>2</b><b>3</b><b>7</b><b>5</b><b>4</b><b>4</b><b>8</b></span><span style="left:126px;color:#9ccbeb"><b>d</b></span><span style="left:140px;color:#fbd287"><b>r</b></span><span style="left:154px;color:#ef6d66"><b>w</b></span><span style="left:168px;color:#e8e68e"><b>x</b></span><span style="left:182px;color:#fbd287"><b>r</b></span><span style="left:210px;color:#bcbb7c"><b>x</b></span><span style="left:224px;color:#fbd287"><b>r</b></span><span style="left:252px;color:#bcbb7c"><b>x</b></span><span style="left:350px;color:#ef6d66"><b>3</b></span><span style="left:560px;color:#fbd287"><b>b</b><b>e</b><b>n</b></span><span style="left:630px;color:#fbd287"><b>s</b><b>t</b><b>a</b><b>f</b><b>f</b></span><span style="left:714px;color:#89a8c0"><b> </b><b>1</b><b> </b><b>M</b><b>a</b><b>r</b><b> </b><b> </b><b>1</b><b> </b><b>5</b><b>1</b></span><span style="left:966px;color:#9ccbeb"><b>c</b><b>o</b><b>n</b><b>t</b><b>r</b><b>i</b><b>b</b></span></div>
<i class="h" style="left:319px;top:1221px;background:#b8b8b8"></i>
<i class="h" style="left:361px;top:1221px;background:#b8b8b8"></i>
<i class="h" style="left:557px;top:1221px;background:#b8b8b8"></i>
<i class="h" style="left:655px;top:1221px;background:#b8b8b8"></i>
<i class="d" style="left:965.7px;top:1225.8px;background:#89a8c0"></i>
<i class="d" style="left:965.7px;top:1216.2px;background:#89a8c0"></i>
<i class="h" style="left:1047px;top:1221px;background:#a0a0a0"></i>
<i class="h" style="left:1061px;top:1221px;background:#a0a0a0"></i>
<div class="row" style="top:1233px"><span style="left:0px;color:#b494c4"><b>1</b><b>2</b><b>0</b><b>1</b><b>1</b><b>7</b><b>0</b><b>4</b></span><span style="left:126px;color:#9ccbeb"><b>d</b></span><span style="left:140px;color:#fbd287"><b>r</b></span><span style="left:154px;color:#ef6d66"><b>w</b></span><span style="left:168px;color:#e8e68e"><b>x</b></span><span style="left:182px;color:#fbd287"><b>r</b></span><span style="left:210px;color:#bcbb7c"><b>x</b></span><span style="left:224px;color:#fbd287"><b>r</b></span><span style="left:252px;color:#bcbb7c"><b>x</b></span><span style="left:350px;color:#ef6d66"><b>3</b></span><span style="left:560px;color:#fbd287"><b>b</b><b>e</b><b>n</b></span><span style="left:630px;color:#fbd287"><b>s</b><b>t</b><b>a</b><b>f</b><b>f</b></span><span style="left:714px;color:#89a8c0"><b>2</b><b>4</b><b> </b><b>F</b><b>e</b><b>b</b><b> </b><b>1</b><b>1</b><b> </b><b>5</b><b>3</b></span><span style="left:966px;color:#9ccbeb"><b>m</b><b>a</b><b>n</b></span></div>
<i class="h" style="left:319px;top:1255px;background:#b8b8b8"></i>
<i class="h" style="left:361px;top:1255px;background:#b8b8b8"></i>
<i class="h" style="left:557px;top:1255px;background:#b8b8b8"></i>
<i class="h" style="left:655px;top:1255px;background:#b8b8b8"></i>
<i class="d" style="left:965.7px;top:1259.8px;background:#89a8c0"></i>
<i class="d" style="left:965.7px;top:1250.2px;background:#89a8c0"></i>
<i class="h" style="left:1047px;top:1255px;background:#a0a0a0"></i>
<i class="h" style="left:1061px;top:1255px;background:#a0a0a0"></i>
<i class="h" style="left:1187px;top:1255px;background:#9ccbeb"></i>
<div class="row" style="top:1267px"><span style="left:0px;color:#b494c4"><b>1</b><b>2</b><b>4</b><b>3</b><b>4</b><b>8</b><b>7</b><b>1</b></span><span style="left:126px;color:#9ccbeb"><b>d</b></span><span style="left:140px;color:#fbd287"><b>r</b></span><span style="left:154px;color:#ef6d66"><b>w</b></span><span style="left:168px;color:#e8e68e"><b>x</b></span><span style="left:182px;color:#fbd287"><b>r</b></span><span style="left:210px;color:#bcbb7c"><b>x</b></span><span style="left:224px;color:#fbd287"><b>r</b></span><span style="left:252px;color:#bcbb7c"><b>x</b></span><span style="left:350px;color:#ef6d66"><b>4</b></span><span style="left:560px;color:#fbd287"><b>b</b><b>e</b><b>n</b></span><span style="left:630px;color:#fbd287"><b>s</b><b>t</b><b>a</b><b>f</b><b>f</b></span><span style="left:714px;color:#89a8c0"><b> </b><b>3</b><b> </b><b>M</b><b>a</b><b>y</b><b> </b><b>1</b><b>8</b><b> </b><b>1</b><b>3</b></span><span style="left:966px;color:#9ccbeb"><b>r</b><b>e</b><b>l</b><b>e</b><b>a</b><b>s</b><b>e</b><b> </b><b>n</b><b>o</b><b>t</b><b>e</b><b>s</b></span></div>
<i class="d" style="left:251.7px;top:1293.8px;background:#c9cac9"></i>
<i class="h" style="left:291px;top:1289px;background:#b8b8b8"></i>
<i class="h" style="left:319px;top:1289px;background:#b8b8b8"></i>
<i class="h" style="left:333px;top:1289px;background:#b8b8b8"></i>
<i class="h" style="left:361px;top:1289px;background:#b8b8b8"></i>
<i class="h" style="left:375px;top:1289px;background:#b8b8b8"></i>
<i class="h" style="left:1047px;top:1289px;background:#a0a0a0"></i>
<i class="h" style="left:1061px;top:1289px;background:#a0a0a0"></i>
<i class="d" style="left:1231.7px;top:1293.8px;background:#e492e4"></i>
<div class="row" style="top:1301px"><span style="left:14px;color:#b494c4"><b>3</b><b>5</b><b>0</b><b>0</b><b>8</b><b>6</b><b>9</b></span><span style="left:140px;color:#fbd287"><b>r</b></span><span style="left:154px;color:#ef6d66"><b>w</b></span><span style="left:182px;color:#fbd287"><b>r</b></span><span style="left:224px;color:#fbd287"><b>r</b></span><span style="left:266px;color:#c9cac9"><b>@</b></span><span style="left:350px;color:#ef6d66"><b>1</b></span><span style="left:378px;color:#e8e49a"><b>1</b><b>9</b><b>1</b></span><span style="left:420px;color:#c0bc86"><b>K</b><b>i</b></span><span style="left:504px;color:#86b9b2"><b>3</b><b>8</b><b>4</b></span><span style="left:560px;color:#fbd287"><b>b</b><b>e</b><b>n</b></span><span style="left:630px;color:#fbd287"><b>s</b><b>t</b><b>a</b><b>f</b><b>f</b></span><span style="left:714px;color:#89a8c0"><b>1</b><b>8</b><b> </b><b>D</b><b>e</b><b>c</b><b> </b><b> </b><b>2</b><b>0</b><b>1</b><b>4</b></span><span style="left:966px;color:#e492e4"><b>s</b><b>c</b><b>r</b><b>e</b><b>e</b><b>n</b><b>s</b><b>h</b><b>o</b><b>t</b><b> </b><b>p</b><b>n</b><b>g</b></span></div>
<i class="h" style="left:319px;top:1323px;background:#b8b8b8"></i>
<i class="h" style="left:361px;top:1323px;background:#b8b8b8"></i>
<i class="h" style="left:557px;top:1323px;background:#b8b8b8"></i>
<i class="h" style="left:655px;top:1323px;background:#b8b8b8"></i>
<i class="d" style="left:965.7px;top:1327.8px;background:#89a8c0"></i>
<i class="d" style="left:965.7px;top:1318.2px;background:#89a8c0"></i>
<i class="h" style="left:1047px;top:1323px;background:#a0a0a0"></i>
<i class="h" style="left:1061px;top:1323px;background:#a0a0a0"></i>
<div class="row" style="top:1335px"><span style="left:14px;color:#b494c4"><b>1</b><b>9</b><b>7</b><b>1</b><b>3</b><b>2</b><b>5</b></span><span style="left:126px;color:#9ccbeb"><b>d</b></span><span style="left:140px;color:#fbd287"><b>r</b></span><span style="left:154px;color:#ef6d66"><b>w</b></span><span style="left:168px;color:#e8e68e"><b>x</b></span><span style="left:182px;color:#fbd287"><b>r</b></span><span style="left:210px;color:#bcbb7c"><b>x</b></span><span style="left:224px;color:#fbd287"><b>r</b></span><span style="left:252px;color:#bcbb7c"><b>x</b></span><span style="left:336px;color:#ef6d66"><b>1</b><b>2</b></span><span style="left:560px;color:#fbd287"><b>b</b><b>e</b><b>n</b></span><span style="left:630px;color:#fbd287"><b>s</b><b>t</b><b>a</b><b>f</b><b>f</b></span><span style="left:714px;color:#89a8c0"><b> </b><b>5</b><b> </b><b>J</b><b>u</b><b>n</b><b> </b><b> </b><b>3</b><b> </b><b>1</b><b>1</b></span><span style="left:966px;color:#9ccbeb"><b>s</b><b>r</b><b>c</b></span></div>
<i class="h" style="left:319px;top:1357px;background:#b8b8b8"></i>
<i class="h" style="left:361px;top:1357px;background:#b8b8b8"></i>
<i class="h" style="left:557px;top:1357px;background:#b8b8b8"></i>
<i class="h" style="left:655px;top:1357px;background:#b8b8b8"></i>
<i class="d" style="left:965.7px;top:1361.8px;background:#89a8c0"></i>
<i class="d" style="left:965.7px;top:1352.2px;background:#89a8c0"></i>
<i class="h" style="left:1047px;top:1357px;background:#a0a0a0"></i>
<i class="h" style="left:1061px;top:1357px;background:#a0a0a0"></i>
<div class="row" style="top:1369px"><span style="left:0px;color:#b494c4"><b>1</b><b>9</b><b>5</b><b>8</b><b>5</b><b>8</b><b>1</b><b>3</b></span><span style="left:126px;color:#9ccbeb"><b>d</b></span><span style="left:140px;color:#fbd287"><b>r</b></span><span style="left:154px;color:#ef6d66"><b>w</b></span><span style="left:168px;color:#e8e68e"><b>x</b></span><span style="left:182px;color:#fbd287"><b>r</b></span><span style="left:210px;color:#bcbb7c"><b>x</b></span><span style="left:224px;color:#fbd287"><b>r</b></span><span style="left:252px;color:#bcbb7c"><b>x</b></span><span style="left:350px;color:#ef6d66"><b>3</b></span><span style="left:560px;color:#fbd287"><b>b</b><b>e</b><b>n</b></span><span style="left:630px;color:#fbd287"><b>s</b><b>t</b><b>a</b><b>f</b><b>f</b></span><span style="left:714px;color:#89a8c0"><b>2</b><b>9</b><b> </b><b>M</b><b>a</b><b>y</b><b> </b><b>2</b><b>0</b><b> </b><b>4</b><b>0</b></span><span style="left:966px;color:#9ccbeb"><b>t</b><b>a</b><b>r</b><b>g</b><b>e</b><b>t</b></span></div>
<i class="d" style="left:153.7px;top:1429.8px;background:#e8e496"></i>
<i class="d" style="left:153.7px;top:1420.2px;background:#e8e496"></i>
<i class="d" style="left:195.7px;top:1429.8px;background:#e8e496"></i>
<i class="d" style="left:391.7px;top:1429.8px;background:#b494c4"></i>
<i class="d" style="left:391.7px;top:1420.2px;background:#b494c4"></i>
<div class="row" style="top:1437px"><span style="left:0px;color:#e8e496"><b>0</b><b>3</b><b> </b><b>1</b><b>1</b><b> </b><b>5</b><b>6</b></span><span style="left:126px;color:#fbd287"><b>~</b><b>/</b><b>C</b><b>o</b><b>d</b><b>e</b><b>/</b><b>e</b><b>x</b><b>a</b></span><span style="left:280px;color:#dcb2ea"><b>m</b><b>a</b><b>s</b><b>t</b><b>e</b><b>r</b></span></div>
<div class="row" style="top:1471px"><span style="left:0px;color:#c9cac9"><b>$</b></span></div>
<div id="cursor"></div>
</body></html>
